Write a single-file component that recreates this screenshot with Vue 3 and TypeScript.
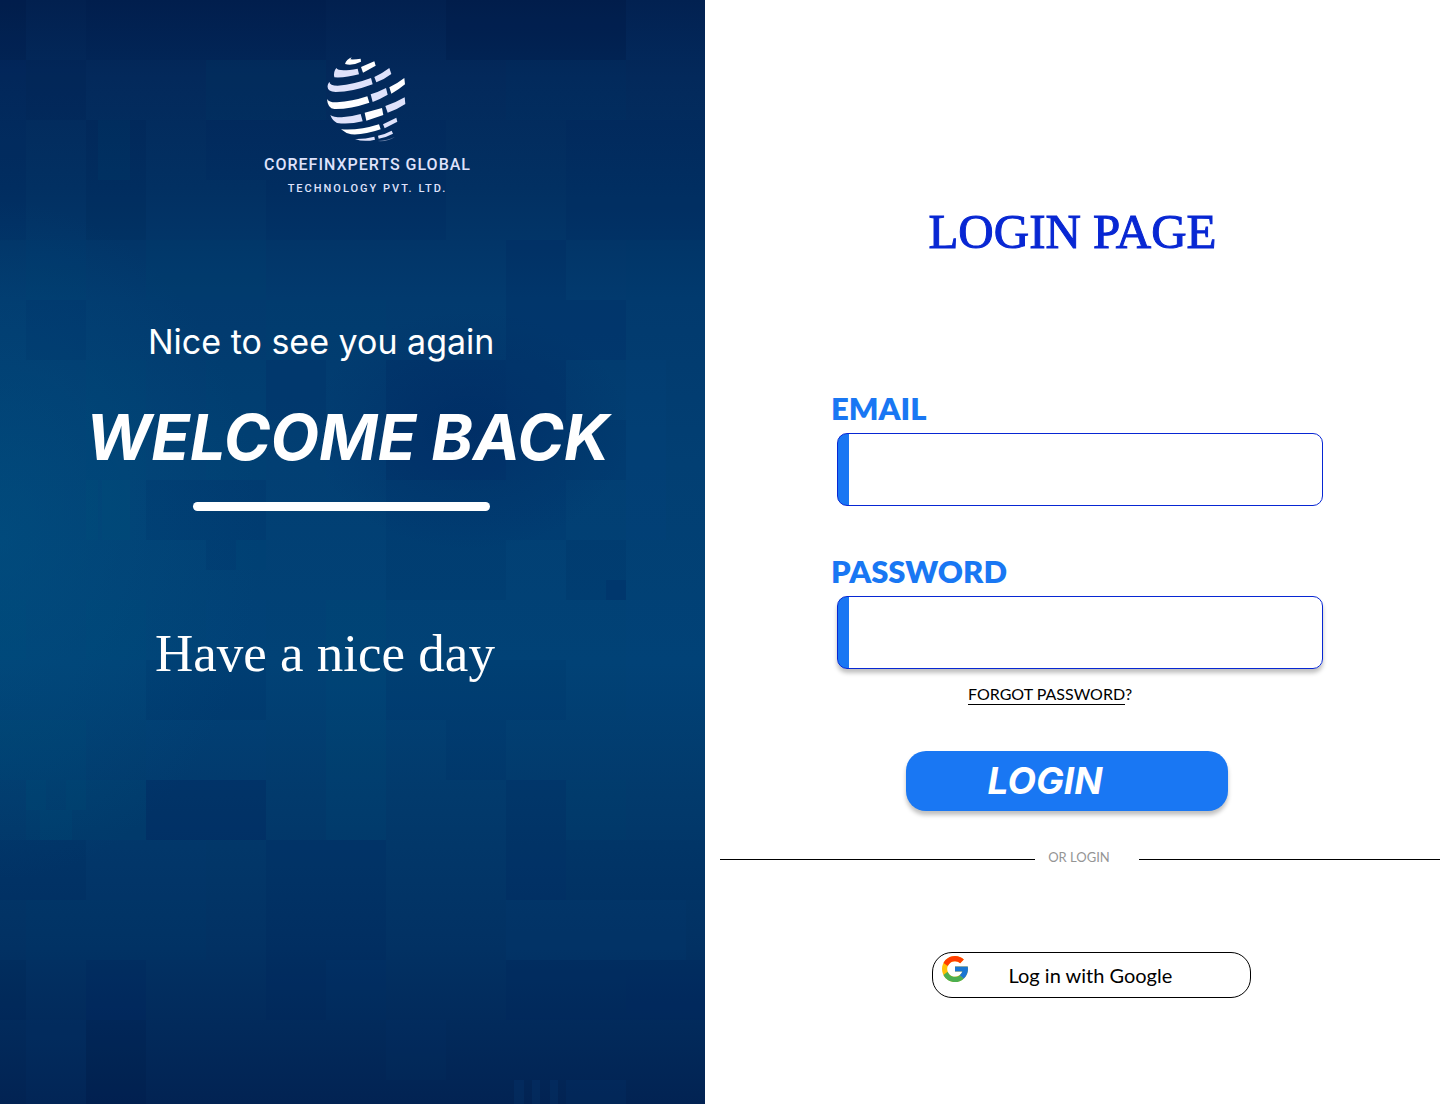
<script setup lang="ts">
import { ref } from 'vue'

interface Tile {
  x: number
  y: number
  w: number
  h: number
  fill: string
  opacity: number
}

const email = ref('')
const password = ref('')

const dark = '#001440'
const navy = '#00205c'
const teal = '#00597f'
const blue = '#0c4c8c'

function tile(x: number, y: number, w: number, h: number, fill: string, opacity: number): Tile {
  return { x, y, w, h, fill, opacity }
}

const tiles: Tile[] = [
  tile(0, 0, 26, 60, dark, 0.3),
  tile(86, 0, 240, 60, dark, 0.12),
  tile(446, 0, 180, 60, dark, 0.35),
  tile(626, 0, 79, 60, blue, 0.08),
  tile(26, 60, 60, 60, dark, 0.12),
  tile(206, 60, 120, 60, teal, 0.12),
  tile(506, 60, 120, 60, teal, 0.08),
  tile(0, 60, 26, 180, navy, 0.2),
  tile(86, 120, 60, 120, dark, 0.14),
  tile(98, 120, 32, 60, teal, 0.14),
  tile(206, 120, 240, 60, navy, 0.12),
  tile(566, 120, 139, 120, navy, 0.16),
  tile(266, 180, 180, 60, navy, 0.22),
  tile(26, 240, 60, 60, teal, 0.1),
  tile(146, 240, 120, 60, teal, 0.12),
  tile(506, 240, 60, 60, navy, 0.25),
  tile(626, 240, 79, 60, teal, 0.06),
  tile(26, 300, 60, 60, navy, 0.12),
  tile(266, 300, 120, 60, teal, 0.12),
  tile(506, 300, 120, 60, navy, 0.26),
  tile(86, 360, 60, 120, teal, 0.1),
  tile(206, 360, 60, 120, teal, 0.12),
  tile(266, 360, 60, 60, navy, 0.25),
  tile(386, 360, 120, 60, navy, 0.34),
  tile(506, 360, 60, 60, navy, 0.3),
  tile(326, 420, 60, 60, blue, 0.12),
  tile(386, 420, 120, 60, navy, 0.4),
  tile(506, 420, 120, 60, navy, 0.18),
  tile(626, 360, 40, 180, blue, 0.16),
  tile(86, 480, 12, 60, teal, 0.22),
  tile(102, 480, 28, 60, teal, 0.3),
  tile(146, 480, 120, 60, navy, 0.16),
  tile(386, 480, 180, 60, navy, 0.1),
  tile(206, 540, 60, 30, navy, 0.16),
  tile(236, 540, 30, 30, teal, 0.25),
  tile(386, 540, 120, 60, navy, 0.14),
  tile(566, 540, 60, 60, navy, 0.2),
  tile(606, 580, 20, 20, navy, 0.4),
  tile(0, 600, 26, 60, teal, 0.2),
  tile(86, 600, 60, 60, teal, 0.14),
  tile(206, 600, 60, 60, blue, 0.14),
  tile(326, 600, 60, 120, teal, 0.18),
  tile(386, 660, 180, 60, navy, 0.12),
  tile(146, 660, 120, 60, navy, 0.16),
  tile(626, 600, 79, 120, blue, 0.12),
  tile(0, 720, 86, 60, teal, 0.2),
  tile(146, 720, 120, 60, blue, 0.12),
  tile(326, 720, 60, 120, teal, 0.22),
  tile(446, 720, 60, 60, navy, 0.14),
  tile(26, 780, 120, 60, teal, 0.18),
  tile(26, 780, 20, 30, teal, 0.2),
  tile(66, 780, 20, 30, teal, 0.2),
  tile(40, 810, 32, 30, teal, 0.22),
  tile(146, 780, 120, 60, navy, 0.5),
  tile(506, 780, 60, 120, navy, 0.26),
  tile(566, 780, 60, 60, teal, 0.08),
  tile(0, 840, 86, 60, navy, 0.16),
  tile(86, 840, 120, 60, blue, 0.08),
  tile(266, 840, 120, 60, navy, 0.22),
  tile(566, 840, 139, 60, navy, 0.14),
  tile(26, 900, 180, 60, teal, 0.08),
  tile(266, 900, 120, 120, navy, 0.22),
  tile(506, 900, 180, 60, blue, 0.14),
  tile(0, 960, 26, 60, dark, 0.16),
  tile(86, 960, 60, 60, navy, 0.26),
  tile(326, 960, 60, 60, blue, 0.1),
  tile(506, 960, 120, 60, navy, 0.24),
  tile(626, 960, 79, 60, navy, 0.3),
  tile(26, 1020, 60, 84, blue, 0.12),
  tile(86, 1020, 60, 84, dark, 0.25),
  tile(386, 1020, 60, 60, blue, 0.1),
  tile(514, 1080, 10, 24, blue, 0.3),
  tile(532, 1080, 8, 24, blue, 0.3),
  tile(550, 1080, 8, 24, blue, 0.3),
  tile(566, 1080, 60, 24, blue, 0.2),
]
</script>

<template>
  <main class="page">
    <section class="welcome">
      <svg class="backdrop" viewBox="0 0 705 1104" preserveAspectRatio="none" aria-hidden="true">
        <rect
          v-for="(t, i) in tiles"
          :key="i"
          :x="t.x"
          :y="t.y"
          :width="t.w"
          :height="t.h"
          :fill="t.fill"
          :opacity="t.opacity"
        />
      </svg>

      <div class="brand">
        <svg class="globe" viewBox="36 15 246 264" aria-hidden="true">
          <g fill="#fff">
            <path d="M90 42Q94 28 110 22L106 28Q120 29 137 26L138 35Q112 48 90 42Z" />
            <path d="M138 51L178 34L182 47L144 68Z" />
            <path d="M223 112Q246 101 268 84L270 103Q250 120 229 131Z" />
            <path d="M36 147Q42 158 66 157Q112 154 157 139L163 158Q104 178 58 177Q38 176 36 147Z" />
            <path d="M149 188L201 174L205 195L154 212Z" />
            <path d="M78 238Q132 242 192 223L197 238Q146 256 108 253Q92 250 78 238Z" />
          </g>
          <g fill="#dfe2fb">
            <path d="M64 54Q70 66 128 56L132 73Q92 84 58 82Q54 66 64 54Z" />
            <path d="M178 81Q202 70 223 54L229 72Q208 88 184 97Z" />
            <path d="M43 95Q44 107 68 107Q118 103 168 84L173 103Q112 126 62 126Q32 124 39 103Z" />
            <path d="M167 133Q190 126 213 114L218 134Q196 147 173 156Z" />
            <path d="M46 195Q54 202 80 202Q110 200 137 192L143 214Q102 224 66 219Q52 212 46 195Z" />
            <path d="M211 168Q240 159 269 142L271 162Q246 179 218 188Z" />
            <path d="M204 223L244 203L247 215L209 235Z" />
            <path d="M120 267Q148 268 178 260L180 269Q146 277 120 267Z" />
            <path d="M189 257Q212 252 230 242L234 251Q214 262 191 266Z" />
            <path d="M188 273Q218 271 240 260Q218 276 188 273Z" opacity="0.5" />
          </g>
        </svg>
        <p class="brand-name">COREFINXPERTS GLOBAL</p>
        <p class="brand-sub">TECHNOLOGY PVT. LTD.</p>
      </div>

      <p class="greeting">Nice to see you again</p>
      <h2 class="headline">WELCOME BACK</h2>
      <div class="bar"></div>
      <p class="farewell">Have a nice day</p>
    </section>

    <section class="login">
      <h1 class="title">LOGIN PAGE</h1>
      <form class="form" @submit.prevent>
        <div class="field">
          <label for="email">EMAIL</label>
          <input id="email" v-model="email" type="email" />
        </div>
        <div class="field">
          <label for="password">PASSWORD</label>
          <input id="password" v-model="password" class="raised" type="password" />
        </div>
        <a class="forgot" href="#"><span>FORGOT PASSWORD</span>?</a>
        <button class="submit" type="submit">LOGIN</button>
      </form>

      <div class="divider"><span>OR LOGIN</span></div>

      <div class="social">
        <button class="google" type="button">
          <svg viewBox="4 4 40 40" aria-hidden="true">
            <path fill="#FFC107" d="M43.611 20.083H42V20H24v8h11.303c-1.649 4.657-6.08 8-11.303 8-6.627 0-12-5.373-12-12s5.373-12 12-12c3.059 0 5.842 1.154 7.961 3.039l5.657-5.657C34.046 6.053 29.268 4 24 4 12.955 4 4 12.955 4 24s8.955 20 20 20 20-8.955 20-20c0-1.341-.138-2.65-.389-3.917z" />
            <path fill="#FF3D00" d="M6.306 14.691l6.571 4.819C14.655 15.108 18.961 12 24 12c3.059 0 5.842 1.154 7.961 3.039l5.657-5.657C34.046 6.053 29.268 4 24 4 16.318 4 9.656 8.337 6.306 14.691z" />
            <path fill="#4CAF50" d="M24 44c5.166 0 9.86-1.977 13.409-5.192l-6.19-5.238C29.211 35.091 26.715 36 24 36c-5.202 0-9.619-3.317-11.283-7.946l-6.522 5.025C9.505 39.556 16.227 44 24 44z" />
            <path fill="#1976D2" d="M43.611 20.083H42V20H24v8h11.303c-.792 2.237-2.231 4.166-4.087 5.571l6.193 5.238C36.971 39.205 44 34 44 24c0-1.341-.138-2.65-.389-3.917z" />
          </svg>
          <span>Log in with Google</span>
        </button>
      </div>
    </section>
  </main>
</template>

<style>
body {
  margin: 0;
}
</style>

<style scoped>
.page {
  display: grid;
  grid-template-columns: 705fr 735fr;
  min-height: 100vh;
  background: #fff;
}

p,
h1,
h2 {
  margin: 0;
}

.welcome {
  position: relative;
  isolation: isolate;
  overflow: hidden;
  display: flex;
  flex-direction: column;
  align-items: flex-start;
  color: #fff;
  white-space: nowrap;
  background:
    radial-gradient(ellipse 260px 340px at 0 540px, rgba(0, 84, 132, 0.5), transparent),
    radial-gradient(ellipse 160px 120px at 470px 430px, rgba(0, 32, 92, 0.35), transparent),
    linear-gradient(#02204f 0, #03295b 7%, #023062 17%, #023a6e 27%, #023f73 42%, #014276 60%, #023a6c 72%, #023163 86%, #022353 100%);
}

.backdrop {
  position: absolute;
  inset: 0;
  z-index: -1;
  width: 100%;
  height: 100%;
  opacity: 0.5;
}

.brand {
  display: flex;
  flex-direction: column;
  align-items: center;
  margin: 55px 0 0 264px;
  color: #dfe2fb;
  font-family: Roboto, sans-serif;
  font-weight: 500;
}

.globe {
  width: 82px;
  height: 88px;
}

.brand-name {
  margin-top: 12px;
  font-size: 16px;
  line-height: 20px;
  letter-spacing: 1px;
}

.brand-sub {
  margin-top: 6px;
  font-size: 11px;
  line-height: 16px;
  letter-spacing: 2px;
}

.greeting {
  margin: 123px 0 0 148px;
  font: 400 34px/44px Inter, sans-serif;
}

.headline {
  margin: 35px 0 0 86px;
  font: italic 700 63px/76px Inter, sans-serif;
}

.bar {
  width: 297px;
  height: 9px;
  margin: 27px 0 0 193px;
  border-radius: 5px;
  background: #fff;
}

.farewell {
  margin: 112px 0 0 155px;
  font: 400 53px/60px "Liberation Serif", serif;
}

.login {
  display: flex;
  flex-direction: column;
  font-family: Lato, sans-serif;
}

.title {
  margin-top: 204px;
  text-align: center;
  color: #0827d3;
  font: 400 49px/56px "Liberation Serif", serif;
  -webkit-text-stroke: 1px #0827d3;
}

.form {
  display: flex;
  flex-direction: column;
  align-items: flex-start;
  align-self: center;
  width: 486px;
  margin: 128px 0 0 15px;
}

.field {
  display: flex;
  flex-direction: column;
  align-self: stretch;
  margin-bottom: 45px;
}

.field label {
  margin-left: -6px;
  color: #1977f3;
  font-size: 31px;
  font-weight: 800;
  line-height: 40px;
}

.field input {
  box-sizing: border-box;
  height: 73px;
  margin-top: 5px;
  padding: 0 16px 0 28px;
  border: 1px solid #0827d3;
  border-radius: 10px;
  outline: none;
  background: linear-gradient(90deg, #1977f3 11px, #fff 11px);
  font: 400 24px Lato, sans-serif;
}

.field .raised {
  box-shadow: 0 4px 4px rgba(0, 0, 0, 0.25);
}

.forgot {
  margin: -30px 0 0 131px;
  color: #000;
  font-size: 16px;
  line-height: 20px;
  text-decoration: none;
}

.forgot span {
  display: inline-block;
  border-bottom: 1px solid #000;
}

.submit {
  width: 322px;
  height: 60px;
  margin: 46px 0 0 69px;
  padding: 0 44px 0 0;
  border: 0;
  border-radius: 20px;
  background: #1977f3;
  box-shadow: 0 4px 4px rgba(0, 0, 0, 0.25);
  color: #fff;
  font: italic 700 37px/44px Inter, sans-serif;
}

.divider {
  display: flex;
  align-items: center;
  margin: 36px 0 0 15px;
  color: #959595;
  font-size: 13px;
  line-height: 20px;
}

.divider::before,
.divider::after {
  content: "";
  flex: 315 1 0;
  height: 1px;
  background: #000;
}

.divider::after {
  flex-grow: 301;
}

.divider span {
  margin: 0 29px 0 13px;
  padding-bottom: 4px;
}

.social {
  align-self: center;
  margin: 81px 0 48px 37px;
}

.google {
  display: flex;
  align-items: flex-start;
  width: 319px;
  height: 46px;
  padding: 3px 9px;
  border: 1px solid #000;
  border-radius: 20px;
  background: #fff;
  color: #000;
  font: 400 20px/24px Lato, sans-serif;
}

.google svg {
  flex: none;
  width: 26px;
  height: 26px;
}

.google span {
  align-self: center;
  margin-left: 41px;
}
</style>
